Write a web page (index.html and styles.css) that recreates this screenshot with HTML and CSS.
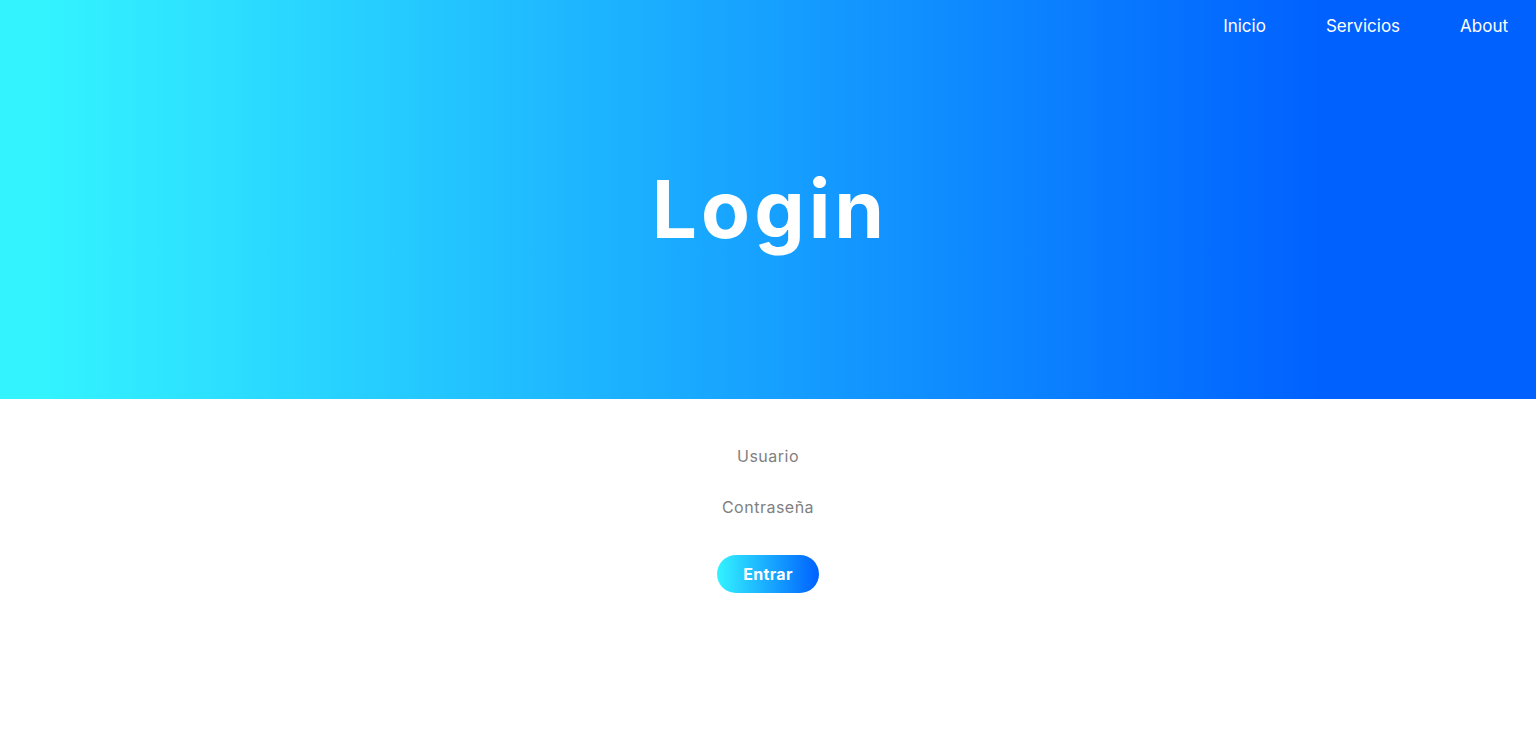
FILE: index.html
```html
<!DOCTYPE html>
<html lang="es">
<head>
<meta charset="utf-8">
<title>Login</title>
<link rel="stylesheet" href="styles.css">
</head>
<body>
<header class="hero">
  <nav class="nav">
    <a href="#">Inicio</a>
    <a href="#">Servicios</a>
    <a href="#">About</a>
  </nav>
  <div class="hero-body">
    <h1 class="title">Login</h1>
  </div>
</header>
<main class="form-wrap">
  <form class="form">
    <input class="field" type="text" placeholder="Usuario">
    <input class="field" type="password" placeholder="Contraseña">
    <button class="btn" type="button">Entrar</button>
  </form>
</main>
</body>
</html>
```
FILE: styles.css
```css
* { box-sizing: border-box; }
html, body { margin: 0; padding: 0; }
body {
  font-family: Inter, "Open Sans", "Liberation Sans", sans-serif;
  background: #fff;
}
.hero {
  height: 399px;
  background: linear-gradient(to right, #33f3ff 3%, #0061ff 86%, #0061ff 100%);
  display: flex;
  flex-direction: column;
}
.nav {
  display: flex;
  justify-content: flex-end;
  gap: 60px;
  padding: 15px 28px 0 0;
}
.nav a {
  color: #fff;
  text-decoration: none;
  font-size: 17px;
  font-weight: 400;
  line-height: 22px;
}
.hero-body {
  flex: 1;
  display: flex;
  align-items: center;
  justify-content: center;
  padding-bottom: 20px;
}
.title {
  margin: 0;
  padding-left: 4px;
  color: #fff;
  font-size: 80px;
  font-weight: 700;
  letter-spacing: 4px;
}
.form-wrap {
  display: flex;
  justify-content: center;
  padding-top: 45px;
}
.form {
  display: flex;
  flex-direction: column;
  align-items: center;
}
.field {
  width: 220px;
  border: none;
  outline: none;
  background: transparent;
  text-align: center;
  font-family: inherit;
  font-size: 16px;
  letter-spacing: 0.5px;
  line-height: 24px;
  padding: 0;
  margin-bottom: 27px;
  color: #333;
}
.field::placeholder { color: #808080; }
.btn {
  margin-top: 9px;
  width: 102px;
  height: 38px;
  border: none;
  border-radius: 19px;
  background: linear-gradient(to right, #33f3ff, #0061ff);
  color: #fff;
  font-family: inherit;
  font-size: 16px;
  font-weight: 700;
  letter-spacing: 0.3px;
  cursor: pointer;
}
```
